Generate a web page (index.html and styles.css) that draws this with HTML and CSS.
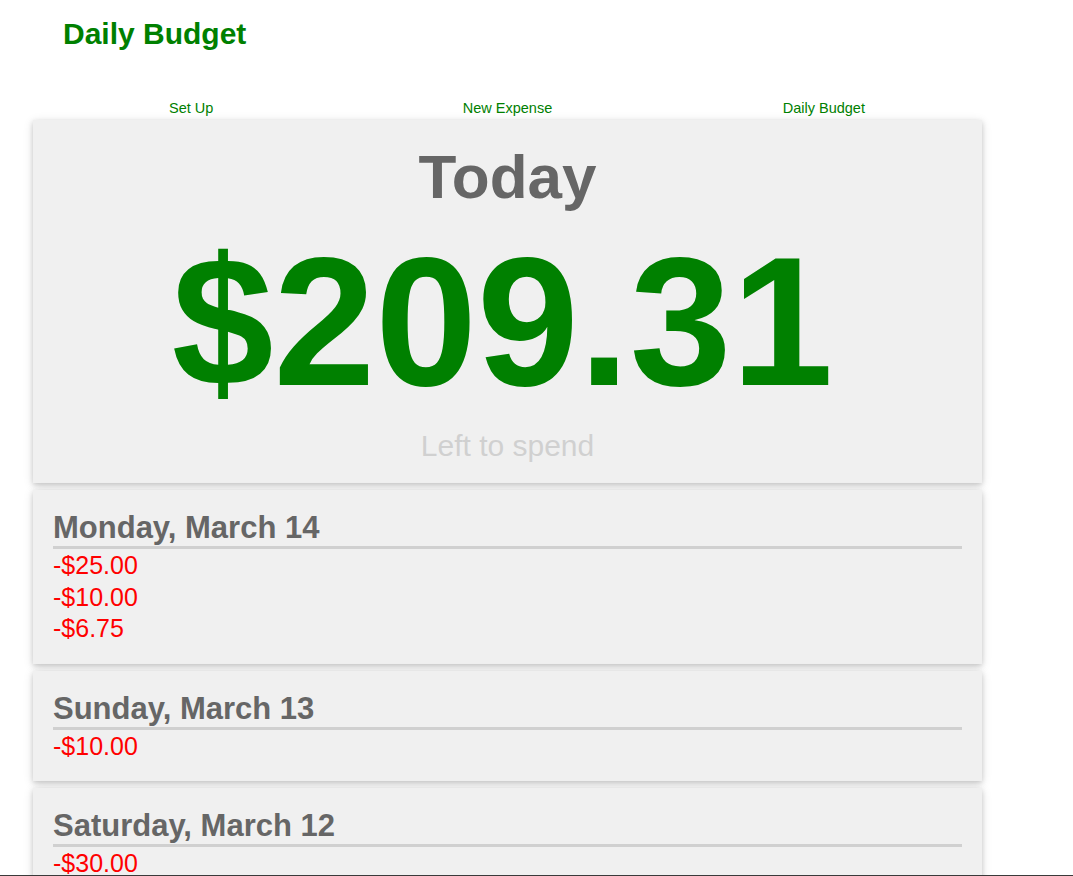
FILE: index.html
```html
<!DOCTYPE html>
<html lang="en">
<head>
<meta charset="utf-8">
<title>Daily Budget</title>
<link rel="stylesheet" href="styles.css">
</head>
<body>
<div class="page">
  <header class="site-header">
    <h1 class="brand">Daily Budget</h1>
  </header>
  <nav class="tabs">
    <a class="tab" href="#">Set Up</a>
    <a class="tab" href="#">New Expense</a>
    <a class="tab" href="#">Daily Budget</a>
  </nav>
  <section class="card today-card">
    <div class="today-label">Today</div>
    <div class="today-amount">$209.31</div>
    <div class="today-sub">Left to spend</div>
  </section>
  <section class="card day-card">
    <h2 class="day-title">Monday, March 14</h2>
    <div class="expenses">
      <div class="expense">-$25.00</div>
      <div class="expense">-$10.00</div>
      <div class="expense">-$6.75</div>
    </div>
  </section>
  <section class="card day-card">
    <h2 class="day-title">Sunday, March 13</h2>
    <div class="expenses">
      <div class="expense">-$10.00</div>
    </div>
  </section>
  <section class="card day-card">
    <h2 class="day-title">Saturday, March 12</h2>
    <div class="expenses">
      <div class="expense">-$30.00</div>
    </div>
  </section>
</div>
<div class="bottom-edge"></div>
</body>
</html>
```

FILE: styles.css
```css
html, body {
  margin: 0;
  padding: 0;
  background: #ffffff;
}
body {
  font-family: "Liberation Sans", Arial, sans-serif;
}
.page {
  width: 949px;
  padding: 0 0 40px 33px;
}
.site-header {
  padding: 19px 0 0 30px;
}
.brand {
  margin: 0;
  font-size: 30px;
  line-height: 30px;
  font-weight: bold;
  color: #008000;
}
.tabs {
  display: grid;
  grid-template-columns: 1fr 1fr 1fr;
  margin-top: 51px;
  margin-bottom: 3px;
}
.tab {
  text-align: center;
  font-size: 14.5px;
  line-height: 17px;
  color: #008000;
  text-decoration: none;
}
.card {
  background: #f0f0f0;
  box-shadow: 0 2px 5px 0 rgba(0,0,0,0.16), 0 2px 10px 0 rgba(0,0,0,0.12);
  margin-bottom: 7px;
}
.today-card {
  display: flex;
  flex-direction: column;
  align-items: center;
  padding: 26px 20px 22px;
}
.today-label {
  font-size: 62px;
  line-height: 61px;
  font-weight: bold;
  color: #666666;
}
.today-amount {
  margin-top: 23px;
  margin-right: 10px;
  font-size: 183px;
  line-height: 184px;
  font-weight: bold;
  color: #008000;
}
.today-sub {
  margin-top: 17px;
  font-size: 30px;
  line-height: 30px;
  color: #d0d0d0;
}
.day-card {
  padding: 22px 20px 19px;
}
.day-title {
  margin: 0;
  font-size: 31px;
  line-height: 31px;
  font-weight: bold;
  color: #666666;
  padding-bottom: 3px;
  border-bottom: 3px solid #d0d0d0;
}
.expenses {
  padding-top: 1px;
}
.expense {
  font-size: 25px;
  line-height: 31.5px;
  color: #ff0000;
}
.bottom-edge {
  position: fixed;
  left: 0;
  right: 0;
  bottom: 0;
  height: 1px;
  background: #3a3a3a;
}
```
